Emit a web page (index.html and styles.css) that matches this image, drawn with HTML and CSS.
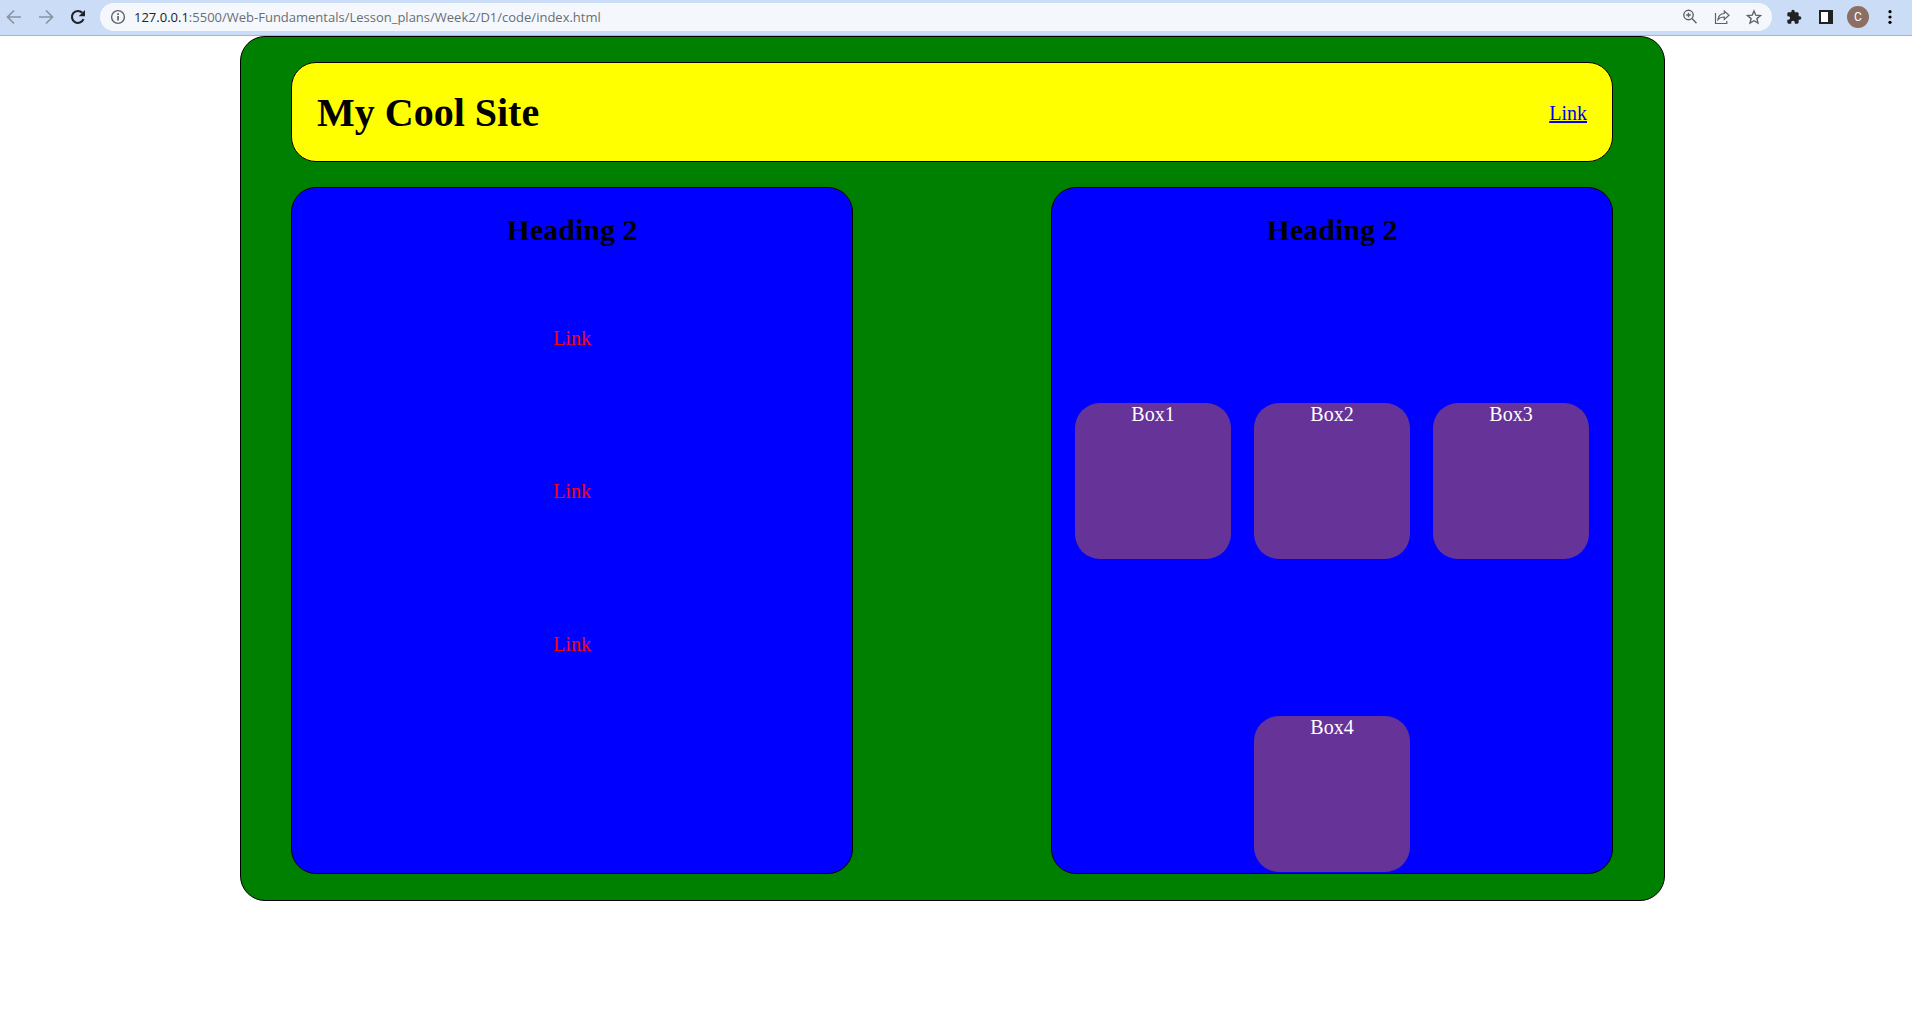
FILE: index.html
```html
<!DOCTYPE html>
<html lang="en">
<head>
<meta charset="utf-8">
<meta name="viewport" content="width=device-width, initial-scale=1">
<title>My Cool Site</title>
<link rel="stylesheet" href="styles.css">
</head>
<body>
<div class="toolbar">
  <div class="nav-buttons">
    <button class="icon-button muted" aria-label="Back"><svg viewBox="0 0 16 16"><path d="M15 8H2M8 1.5 1.5 8 8 14.500" fill="none" stroke="currentColor" stroke-width="1.700"/></svg></button>
    <button class="icon-button muted" aria-label="Forward"><svg viewBox="0 0 16 16"><path d="M1 8h13M8 1.500 14.500 8 8 14.500" fill="none" stroke="currentColor" stroke-width="1.700"/></svg></button>
    <button class="icon-button" aria-label="Reload"><svg viewBox="0 0 16 16"><path d="M13.500 10.200A6 6 0 1 1 12.300 3.800" fill="none" stroke="currentColor" stroke-width="2.100"/><path d="M15 1v6.300H8.700z" fill="currentColor"/></svg></button>
  </div>
  <div class="address-bar">
    <button class="icon-button grey" aria-label="Site information"><svg viewBox="0 0 16 16"><circle cx="8" cy="8" r="6.400" fill="none" stroke="currentColor" stroke-width="1.400"/><path d="M7.200 7h1.700v4.600H7.200zM7.200 4.200h1.700v1.700H7.200z" fill="currentColor"/></svg></button>
    <div class="url"><span class="host">127.0.0.1</span>:5500/Web-Fundamentals/Lesson_plans/Week2/D1/code/index.html</div>
    <div class="actions">
      <button class="icon-button grey" aria-label="Zoom"><svg viewBox="0 0 16 16"><circle cx="6.500" cy="6" r="4.700" fill="none" stroke="currentColor" stroke-width="1.400"/><path d="M10 9.500l4.500 4.700M6.500 3.700v4.600M4.200 6h4.600" fill="none" stroke="currentColor" stroke-width="1.400"/></svg></button>
      <button class="icon-button grey" aria-label="Share"><svg viewBox="0 0 16 16"><path d="M1.500 4v10.500h11.300V12M4 10.500c.5-4 2.800-5.800 6.300-6V2l4.700 4.200-4.700 4.200V8C7.500 8 5.500 8.700 4 10.500z" fill="none" stroke="currentColor" stroke-width="1.200"/></svg></button>
      <button class="icon-button grey" aria-label="Bookmark"><svg viewBox="0 0 16 16"><path d="M8 2l1.800 4.200 4.600.4-3.500 3 1.100 4.500L8 11.700l-4 2.400 1.100-4.500-3.500-3 4.600-.4z" fill="none" stroke="currentColor" stroke-width="1.400"/></svg></button>
    </div>
  </div>
  <div class="menu-buttons">
    <button class="icon-button" aria-label="Extensions"><svg viewBox="0 0 24 24"><path d="M20.500 11H19V7c0-1.100-.9-2-2-2h-4V3.500a2.500 2.500 0 0 0-5 0V5H4c-1.100 0-2 .9-2 2v3.800h1.500a2.700 2.700 0 0 1 0 5.400H2V20c0 1.100.9 2 2 2h3.800v-1.500a2.700 2.700 0 0 1 5.400 0V22H17c1.100 0 2-.9 2-2v-4h1.500a2.500 2.500 0 0 0 0-5z" fill="currentColor"/></svg></button>
    <button class="icon-button" aria-label="Side panel"><svg viewBox="0 0 16 16"><path d="M1 1h14v14H1z" fill="currentColor"/><path d="M3 3h7v10H3z" fill="#fff"/></svg></button>
    <button class="avatar" aria-label="Profile">C</button>
    <button class="icon-button" aria-label="Menu"><svg viewBox="0 0 16 16"><circle cx="8" cy="2.700" r="1.600"/><circle cx="8" cy="8" r="1.600"/><circle cx="8" cy="13.300" r="1.600"/></svg></button>
  </div>
</div>
<main class="page">
  <div class="container">
    <header class="banner">
      <h1>My Cool Site</h1>
      <a href="#">Link</a>
    </header>
    <div class="columns">
      <section class="panel">
        <h2>Heading 2</h2>
        <nav class="links">
          <a href="#">Link</a>
          <a href="#">Link</a>
          <a href="#">Link</a>
        </nav>
      </section>
      <section class="panel">
        <h2>Heading 2</h2>
        <div class="boxes">
          <div class="box">Box1</div>
          <div class="box">Box2</div>
          <div class="box">Box3</div>
          <div class="box">Box4</div>
        </div>
      </section>
    </div>
  </div>
</main>
</body>
</html>
```
FILE: styles.css
```css
* {
  box-sizing: border-box;
}

body {
  margin: 0;
  background: #fff;
  font: 20px/22px "Liberation Serif", serif;
}

h1,
h2 {
  margin: 0;
}

/* Browser toolbar */
.toolbar {
  display: flex;
  align-items: center;
  height: 36px;
  padding: 0 14px 2px 6px;
  border-bottom: 1px solid #a5b4cb;
  background: #cbdcf7;
  color: #202124;
}

.nav-buttons {
  display: flex;
  gap: 16px;
  width: 94px;
}

.icon-button {
  display: block;
  flex: none;
  width: 16px;
  height: 16px;
  padding: 0;
  border: 0;
  background: none;
  color: inherit;
}

.icon-button svg {
  display: block;
  width: 100%;
  height: 100%;
}

.muted {
  color: #8a93a3;
}

.grey {
  color: #5f6368;
}

.address-bar {
  display: flex;
  flex: 1;
  align-items: center;
  gap: 8px;
  min-width: 0;
  height: 28px;
  padding: 0 10px;
  border-radius: 14px;
  background: #f4f8fd;
}

.url {
  flex: 1;
  min-width: 0;
  overflow: hidden;
  color: #6a6e73;
  font: 13px/20px "Open Sans", sans-serif;
  white-space: nowrap;
}

.host {
  color: #202124;
}

.actions {
  display: flex;
  gap: 16px;
}

.menu-buttons {
  display: flex;
  align-items: center;
  gap: 13px;
  padding-left: 14px;
}

.menu-buttons .icon-button:first-child {
  margin-right: 3px;
}

.avatar {
  width: 22px;
  height: 22px;
  padding: 0;
  border: 0;
  border-radius: 50%;
  background: #8d6e63;
  color: #fff;
  font: 12px/22px Roboto, sans-serif;
}

/* Page */
.page {
  padding: 0 247px 0 240px;
}

.container {
  display: flex;
  flex-direction: column;
  gap: 25px;
  padding: 25px 51px 26px 50px;
  border: 1px solid #000;
  border-radius: 25px;
  background: green;
}

.banner {
  display: flex;
  align-items: center;
  justify-content: space-between;
  padding: 26px 25px 24px;
  border: 1px solid #000;
  border-radius: 25px;
  background: yellow;
}

.banner h1 {
  font-size: 40px;
  line-height: 48px;
}

.banner a {
  color: #00e;
}

.columns {
  display: flex;
  justify-content: space-between;
}

.panel {
  width: 43%;
  max-width: 562px;
  padding-top: 25px;
  border: 1px solid #000;
  border-radius: 25px;
  background: blue;
  text-align: center;
}

.panel h2 {
  font-size: 30px;
  line-height: 34px;
}

.links {
  display: flex;
  flex-direction: column;
  align-items: center;
  gap: 131px;
  padding: 80px 0;
}

.links a {
  color: red;
  text-decoration: none;
}

.boxes {
  display: flex;
  flex-wrap: wrap;
  justify-content: center;
  gap: 157px 23px;
  padding: 156px 0 1px;
}

.box {
  width: 156px;
  height: 156px;
  border-radius: 25px;
  background: rebeccapurple;
  color: #fff;
}
```
